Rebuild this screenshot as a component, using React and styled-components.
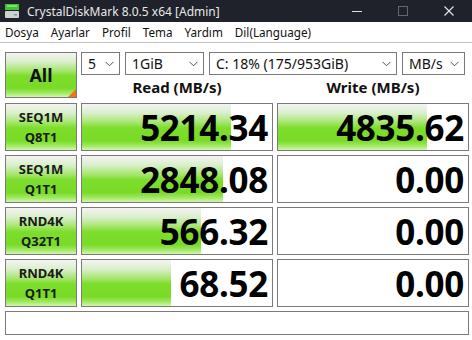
import React from 'react';
import styled, { createGlobalStyle } from 'styled-components';

const Global = createGlobalStyle`
  html, body { margin: 0; padding: 0; background: #ffffff; }
  body { font-family: "Noto Sans", "Open Sans", sans-serif; }
`;

const GREEN = `linear-gradient(to bottom,
  #f4f4f4 0%, #d9efcb 20%, #a6e66e 40%, #7ddd2c 52%, #78db26 80%, #a6ea6a 92%, #d4f6b4 100%)`;

const Window = styled.div`
  width: 472px;
  height: 340px;
  background: #ffffff;
  overflow: hidden;
`;

const TitleBar = styled.div`
  height: 22px;
  background: #1f222a;
  display: flex;
  align-items: center;
  color: #e8e8e8;
  font-size: 12px;
`;

const TitleText = styled.span`
  margin-left: 7px;
  flex: 1;
`;

const WinButton = styled.div`
  width: 46px;
  height: 22px;
  display: flex;
  align-items: center;
  justify-content: center;
`;

const MenuBar = styled.div`
  height: 20px;
  display: flex;
  align-items: center;
  padding-left: 5px;
  font-size: 11.7px;
  color: #111;
  border-bottom: 1px solid #c4c4c4;
`;

const MenuItem = styled.span`
  margin-right: ${p => p.$gap}px;
`;

const Main = styled.div`
  padding: 9px 3px 0 5px;
  display: flex;
  flex-direction: column;
  gap: 4px;
`;

const Header = styled.div`
  display: grid;
  grid-template-columns: 72px 1fr;
  column-gap: 4px;
  height: 46px;
  margin-bottom: 1px;
`;

const AllButton = styled.div`
  position: relative;
  box-sizing: border-box;
  border: 1px solid #7a7a7a;
  background: ${GREEN};
  display: flex;
  align-items: center;
  justify-content: center;
  font-weight: 700;
  font-size: 18px;
  color: #111;
`;

const Corner = styled.div`
  position: absolute;
  right: 0;
  bottom: 0;
  width: 0;
  height: 0;
  border-left: 8px solid transparent;
  border-bottom: 8px solid #f07414;
`;

const HeaderRight = styled.div`
  display: flex;
  flex-direction: column;
`;

const SelectRow = styled.div`
  display: flex;
  gap: 5px;
  height: 23px;
`;

const Select = styled.div`
  box-sizing: border-box;
  width: ${p => p.$w}px;
  height: 23px;
  border: 1px solid #7a7a7a;
  background: #fff;
  display: flex;
  align-items: center;
  padding: 0 5px 0 6px;
  font-size: 14px;
  color: #111;
`;

const SelectText = styled.span`
  flex: 1;
  white-space: nowrap;
  overflow: hidden;
`;

const Headings = styled.div`
  flex: 1;
  display: grid;
  grid-template-columns: 1fr 1fr;
  column-gap: 4px;
  align-items: center;
`;

const Heading = styled.div`
  text-align: center;
  font-weight: 700;
  font-size: 15px;
  color: #111;
  padding-top: 1px;
`;

const Row = styled.div`
  display: grid;
  grid-template-columns: 72px 192px 192px;
  column-gap: 4px;
  height: 48px;
`;

const Label = styled.div`
  box-sizing: border-box;
  border: 1px solid #7a7a7a;
  background: ${GREEN};
  display: flex;
  flex-direction: column;
  align-items: center;
  justify-content: center;
  font-weight: 700;
  font-size: 13px;
  line-height: 20px;
  color: #1a1a1a;
`;

const Cell = styled.div`
  position: relative;
  box-sizing: border-box;
  border: 1px solid #7a7a7a;
  background: #fff;
  overflow: hidden;
`;

const Bar = styled.div`
  position: absolute;
  left: 0;
  top: 0;
  bottom: 0;
  background: ${GREEN};
`;

const Value = styled.div`
  position: relative;
  height: 100%;
  display: flex;
  align-items: center;
  justify-content: flex-end;
  padding-right: 4px;
  font-weight: 700;
  font-size: 35px;
  letter-spacing: -0.3px;
  color: #000;
`;

const Comment = styled.div`
  box-sizing: border-box;
  height: 24px;
  width: 464px;
  border: 1px solid #7a7a7a;
  background: #fff;
`;

const Chevron = () => (
  <svg width="9" height="6" viewBox="0 0 9 6">
    <path d="M0.5 0.8 L4.5 4.8 L8.5 0.8" fill="none" stroke="#555" strokeWidth="1" />
  </svg>
);

const AppIcon = () => (
  <svg width="16" height="16" viewBox="0 0 16 16" style={{ marginLeft: 4 }}>
    <rect x="1" y="1" width="14" height="6" fill="#3fc23a" />
    <rect x="3" y="2" width="10" height="2" fill="#7fe06a" />
    <rect x="1" y="8" width="14" height="7" rx="1" fill="#d0d0d0" />
    <rect x="10" y="11" width="3" height="1.5" fill="#5aa0e0" />
  </svg>
);

const rows = [
  { a: 'SEQ1M', b: 'Q8T1', read: '5214.34', rw: 149, write: '4835.62', ww: 149 },
  { a: 'SEQ1M', b: 'Q1T1', read: '2848.08', rw: 141, write: '0.00', ww: 0 },
  { a: 'RND4K', b: 'Q32T1', read: '566.32', rw: 119, write: '0.00', ww: 0 },
  { a: 'RND4K', b: 'Q1T1', read: '68.52', rw: 89, write: '0.00', ww: 0 },
];

const App = () => (
  <Window>
    <Global />
    <TitleBar>
      <AppIcon />
      <TitleText>CrystalDiskMark 8.0.5 x64 [Admin]</TitleText>
      <WinButton>
        <svg width="10" height="10" viewBox="0 0 10 10"><path d="M0 5.5 H10" stroke="#e0e0e0" strokeWidth="1" /></svg>
      </WinButton>
      <WinButton>
        <svg width="10" height="10" viewBox="0 0 10 10"><rect x="0.5" y="0.5" width="9" height="9" fill="none" stroke="#666" strokeWidth="1" /></svg>
      </WinButton>
      <WinButton>
        <svg width="10" height="10" viewBox="0 0 10 10"><path d="M0.5 0.5 L9.5 9.5 M9.5 0.5 L0.5 9.5" stroke="#e8e8e8" strokeWidth="1.1" /></svg>
      </WinButton>
    </TitleBar>
    <MenuBar>
      <MenuItem $gap={12}>Dosya</MenuItem>
      <MenuItem $gap={12}>Ayarlar</MenuItem>
      <MenuItem $gap={12}>Profil</MenuItem>
      <MenuItem $gap={12}>Tema</MenuItem>
      <MenuItem $gap={12}>Yardım</MenuItem>
      <MenuItem $gap={0}>Dil(Language)</MenuItem>
    </MenuBar>
    <Main>
      <Header>
        <AllButton>
          All
          <Corner />
        </AllButton>
        <HeaderRight>
          <SelectRow>
            <Select $w={39}><SelectText>5</SelectText><Chevron /></Select>
            <Select $w={79}><SelectText>1GiB</SelectText><Chevron /></Select>
            <Select $w={188}><SelectText>C: 18% (175/953GiB)</SelectText><Chevron /></Select>
            <Select $w={63}><SelectText>MB/s</SelectText><Chevron /></Select>
          </SelectRow>
          <Headings>
            <Heading>Read (MB/s)</Heading>
            <Heading>Write (MB/s)</Heading>
          </Headings>
        </HeaderRight>
      </Header>
      {rows.map((r, i) => (
        <Row key={i}>
          <Label>
            <span>{r.a}</span>
            <span>{r.b}</span>
          </Label>
          <Cell>
            <Bar style={{ width: r.rw }} />
            <Value>{r.read}</Value>
          </Cell>
          <Cell>
            {r.ww > 0 && <Bar style={{ width: r.ww }} />}
            <Value>{r.write}</Value>
          </Cell>
        </Row>
      ))}
      <Comment />
    </Main>
  </Window>
);

export default App;
